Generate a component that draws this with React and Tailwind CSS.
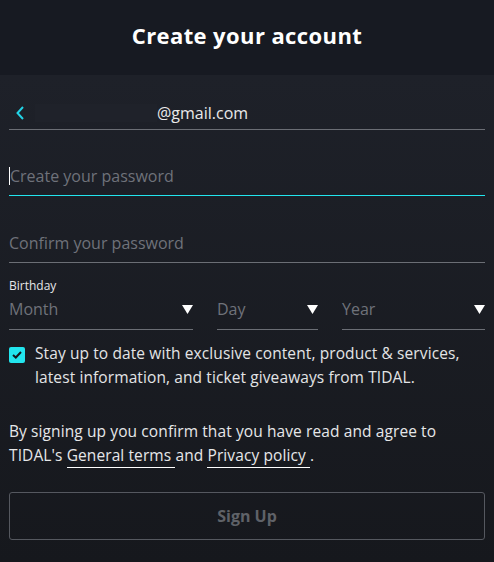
import React from "react";

function Caret() {
  return (
    <svg width="11" height="9" viewBox="0 0 11 9" className="shrink-0">
      <path d="M0 0 H11 L5.5 9 Z" fill="#ffffff" />
    </svg>
  );
}

function Select({ label, className }) {
  return (
    <div className={"flex items-center justify-between border-b border-[#6b6e75] pb-[8px] " + className}>
      <span className="text-[16px] text-[#6f727a]">{label}</span>
      <Caret />
    </div>
  );
}

export default function App() {
  return (
    <div
      className="w-[494px] h-[562px] overflow-hidden text-white"
      style={{ fontFamily: "'Open Sans', Lato, sans-serif" }}
    >
      <div className="h-[75px] bg-[#171a22] flex items-center justify-center pb-[5px]">
        <h1 className="text-[22px] font-bold tracking-[0.4px]">Create your account</h1>
      </div>
      <div className="h-[487px] bg-gradient-to-b from-[#1e2129] to-[#16181d] px-[9px] pt-[21px]">
        {/* email */}
        <div className="flex items-center h-[34px] border-b border-[#6b6e75]">
          <svg width="12" height="16" viewBox="0 0 12 16" className="ml-[6px]">
            <path d="M8 2 L2.5 8 L8 14" stroke="#22d3e6" strokeWidth="2" fill="none" />
          </svg>
          <div className="ml-[8px] w-[122px] h-[18px] bg-[#1f222a]" />
          <span className="text-[16px] text-[#e9e9ea]">@gmail.com</span>
        </div>

        {/* password */}
        <div className="mt-[32px] flex items-center h-[34px] pb-[5px] border-b border-[#22e5ee]">
          <span className="w-px h-[18px] bg-white" />
          <span className="text-[16px] text-[#6f727a]">Create your password</span>
        </div>

        {/* confirm */}
        <div className="mt-[33px] flex items-center h-[34px] pb-[5px] border-b border-[#6b6e75]">
          <span className="text-[16px] text-[#6f727a]">Confirm your password</span>
        </div>

        <div className="mt-[16px] text-[12px] leading-[14px] text-[#e6e6e8]">Birthday</div>
        <div className="mt-[4px] flex gap-[24px]">
          <Select label="Month" className="w-[184px]" />
          <Select label="Day" className="w-[101px]" />
          <Select label="Year" className="flex-1" />
        </div>

        {/* checkbox */}
        <div className="mt-[16px] flex gap-[10px]">
          <div className="mt-[1px] w-[16px] h-[16px] rounded-[2px] bg-[#22e5ee] flex items-center justify-center shrink-0">
            <svg width="10" height="8" viewBox="0 0 10 8">
              <path d="M1 4 L3.8 6.5 L9 1" stroke="#14171d" strokeWidth="2" fill="none" />
            </svg>
          </div>
          <p className="text-[15.5px] leading-[24px] tracking-[0.1px] text-[#e3e4e6] -mt-[5px]">
            Stay up to date with exclusive content, product &amp; services,
            <br />
            latest information, and ticket giveaways from TIDAL.
          </p>
        </div>

        <p className="mt-[30px] text-[15.5px] leading-[24px] tracking-[0.1px] text-[#e6e7e9]">
          By signing up you confirm that you have read and agree to
          <br />
          TIDAL's <span className="border-b border-white pb-[1px]">General terms </span> and{" "}
          <span className="border-b border-white pb-[1px]">Privacy policy </span>.
        </p>

        <button className="mt-[25px] w-full h-[48px] rounded-[3px] border border-[#55585f] text-[16px] font-bold text-[#5f6268]">
          Sign Up
        </button>
      </div>
    </div>
  );
}
